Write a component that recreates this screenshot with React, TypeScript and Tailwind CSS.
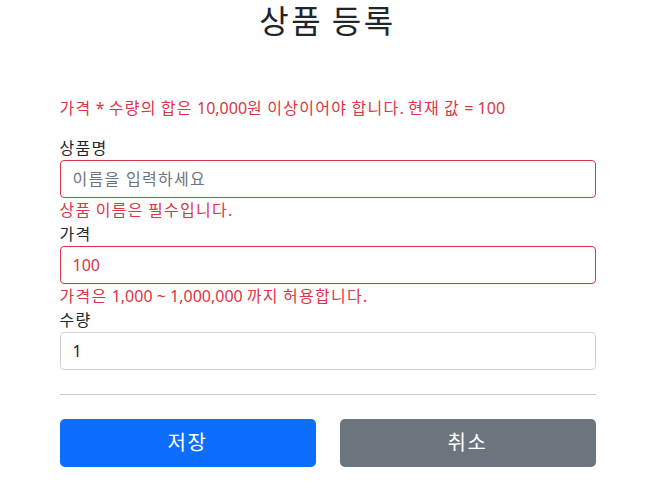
const font = "font-['Noto_Sans','Noto_Sans_CJK_KR',sans-serif]"

// hangul in the reference runs a bit wider than Noto Sans CJK KR, so space those runs out
function Ko({ children }: { children: string }) {
  return (
    <>
      {children.split(/([가-힣]+)/).map((part, i) =>
        /[가-힣]/.test(part) ? (
          <span key={i} className="tracking-[0.08em]">
            {part}
          </span>
        ) : (
          part
        )
      )}
    </>
  )
}

function Field({
  label,
  value,
  placeholder,
  error,
  invalid,
}: {
  label: string
  value?: string
  placeholder?: string
  error?: string
  invalid?: boolean
}) {
  return (
    <div>
      <label className="block leading-6">
        <Ko>{label}</Ko>
      </label>
      <input
        readOnly
        value={value}
        placeholder={placeholder}
        className={`block h-[38px] w-full rounded border px-3 py-1.5 leading-6 outline-none placeholder:tracking-[0.08em] placeholder:text-[#6c757d] ${
          invalid ? 'border-[#dc3545] text-[#dc3545]' : 'border-[#ced4da] text-[#212529]'
        }`}
      />
      {error && (
        <div className="leading-6 text-[#dc3545]">
          <Ko>{error}</Ko>
        </div>
      )}
    </div>
  )
}

export default function App() {
  return (
    <div className={`min-h-screen bg-white text-base text-[#212529] ${font}`}>
      <div className="mx-auto max-w-[560px] px-3">
        <div className="pt-[2px] pb-12 text-center">
          <h2 className="mb-2 text-[32px] leading-[1.2] font-normal">
            <Ko>상품 등록</Ko>
          </h2>
        </div>

        <form>
          <p className="mb-4 leading-6 text-[#dc3545]">
            <Ko>가격 * 수량의 합은 10,000원 이상이어야 합니다. 현재 값 = 100</Ko>
          </p>

          <Field label="상품명" placeholder="이름을 입력하세요" error="상품 이름은 필수입니다." invalid />
          <Field label="가격" value="100" error="가격은 1,000 ~ 1,000,000 까지 허용합니다." invalid />
          <Field label="수량" value="1" />

          <hr className="my-6 border-t border-[#c8c9ca]" />

          <div className="grid grid-cols-2 gap-6">
            <button
              type="button"
              className="h-12 w-full rounded-[5px] bg-[#0d6efd] px-4 text-xl leading-[30px] text-white"
            >
              <Ko>저장</Ko>
            </button>
            <button
              type="button"
              className="h-12 w-full rounded-[5px] bg-[#6c757d] px-4 text-xl leading-[30px] text-white"
            >
              <Ko>취소</Ko>
            </button>
          </div>
        </form>
      </div>
    </div>
  )
}
